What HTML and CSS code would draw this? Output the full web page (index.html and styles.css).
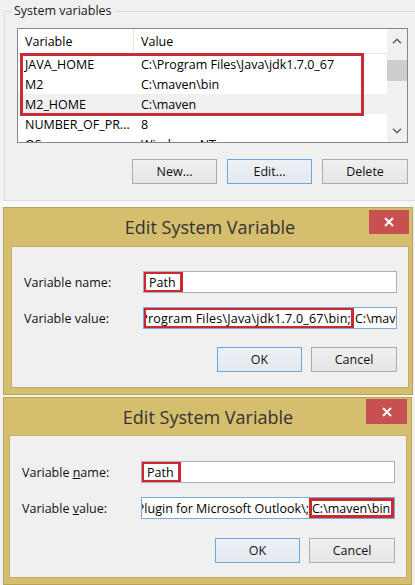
FILE: index.html
```html
<!DOCTYPE html>
<html>
<head>
<meta charset="utf-8">
<link rel="stylesheet" href="styles.css">
</head>
<body>
<div class="screen">
  <section class="sys">
    <fieldset class="group">
      <legend>System variables</legend>
      <div class="listbox">
        <div class="list-main">
          <div class="list-head"><span class="c1">Variable</span><span class="c2">Value</span></div>
          <div class="row"><span class="c1">JAVA_HOME</span><span class="c2">C:\Program Files\Java\jdk1.7.0_67</span></div>
          <div class="row"><span class="c1">M2</span><span class="c2">C:\maven\bin</span></div>
          <div class="row hl"><span class="c1">M2_HOME</span><span class="c2">C:\maven</span></div>
          <div class="row"><span class="c1">NUMBER_OF_PR...</span><span class="c2">8</span></div>
          <div class="row"><span class="c1">OS</span><span class="c2">Windows_NT</span></div>
          <div class="mark"></div>
        </div>
        <div class="scrollbar">
          <div class="sb-btn"><svg width="10" height="6" viewBox="0 0 10 6"><polyline points="1,5.2 5,1.2 9,5.2" fill="none" stroke="#606060" stroke-width="1.5"/></svg></div>
          <div class="sb-track"><div class="sb-thumb"></div></div>
          <div class="sb-btn"><svg width="10" height="6" viewBox="0 0 10 6"><polyline points="1,0.8 5,4.8 9,0.8" fill="none" stroke="#606060" stroke-width="1.5"/></svg></div>
        </div>
      </div>
      <div class="btnrow">
        <div class="btn">New...</div>
        <div class="btn def">Edit...</div>
        <div class="btn wide">Delete</div>
      </div>
    </fieldset>
    <div class="strip"></div>
  </section>

  <section class="dlg">
    <div class="titlebar">
      <span></span>
      <span class="title">Edit System Variable</span>
      <span class="close"><svg width="10" height="10" viewBox="0 0 10 10"><path d="M1 1 L9 9 M9 1 L1 9" stroke="#fff" stroke-width="2"/></svg></span>
    </div>
    <div class="panel">
      <div class="form">
        <span class="lbl">Variable name:</span>
        <div class="field"><span class="anno name">Path</span></div>
        <span class="lbl">Variable value:</span>
        <div class="field focus"><span class="anno long"><span class="txt spaced">Program Files\Java\jdk1.7.0_67\bin;</span></span><span class="rest">C:\maven\bin</span></div>
      </div>
      <div class="dbtns">
        <div class="btn def">OK</div>
        <div class="btn wide">Cancel</div>
      </div>
    </div>
  </section>

  <div class="sep"></div>

  <section class="dlg dlg2">
    <div class="titlebar">
      <span></span>
      <span class="title">Edit System Variable</span>
      <span class="close"><svg width="10" height="10" viewBox="0 0 10 10"><path d="M1 1 L9 9 M9 1 L1 9" stroke="#fff" stroke-width="2"/></svg></span>
    </div>
    <div class="panel">
      <div class="form">
        <span class="lbl">Variable <u>n</u>ame:</span>
        <div class="field"><span class="anno name">Path</span></div>
        <span class="lbl">Variable <u>v</u>alue:</span>
        <div class="field focus"><span class="clipleft"><span class="txt">Plugin for Microsoft Outlook\;</span></span><span class="anno tail">C:\maven\bin<span class="caret"></span></span></div>
      </div>
      <div class="dbtns">
        <div class="btn def">OK</div>
        <div class="btn wide">Cancel</div>
      </div>
    </div>
  </section>
</div>
</body>
</html>
```

FILE: styles.css
```css
html, body {
  margin: 0;
  padding: 0;
}

body {
  font-family: "Open Sans", "Noto Sans", sans-serif;
  font-size: 12.5px;
  color: #000;
  background: #f0f0f0;
}

.screen {
  width: 415px;
  height: 585px;
  overflow: hidden;
  background: #f2f2f2;
  display: flex;
  flex-direction: column;
}

/* ---------- System variables group ---------- */
.sys {
  flex: none;
  height: 207px;
  box-sizing: border-box;
  padding-top: 2px;
  background: #f0f0f0;
  display: flex;
  flex-direction: column;
}

.group {
  margin: 0 0 0 4px;
  padding: 0 0 16px 7px;
  border: 1px solid #dcdcdc;
  width: 440px;
  min-width: 0;
  box-sizing: border-box;
}

.group legend {
  padding: 0 2px;
  line-height: 18px;
  color: #1a1a1a;
}

.listbox {
  margin: 8px 0 0 5px;
  width: 391px;
  height: 115px;
  box-sizing: border-box;
  border: 1px solid #828790;
  background: #fff;
  display: flex;
}

.list-main {
  flex: 1;
  position: relative;
  overflow: hidden;
}

.list-head {
  height: 24px;
  border-bottom: 1px solid #e5e5e5;
  display: flex;
  align-items: center;
}

.list-head .c1 {
  height: 100%;
  display: flex;
  align-items: center;
  border-right: 1px solid #e5e5e5;
}

.c1 {
  width: 116px;
  flex: none;
  box-sizing: border-box;
  padding-left: 7px;
  white-space: nowrap;
}

.c2 {
  padding-left: 7px;
  white-space: nowrap;
}

.row {
  height: 20px;
  display: flex;
  align-items: center;
}

.row.hl {
  background: #f0f0f0;
}

.mark {
  position: absolute;
  left: 2px;
  top: 24px;
  width: 344px;
  height: 63px;
  box-sizing: border-box;
  border: 3px solid #c62d36;
}

.scrollbar {
  width: 20px;
  flex: none;
  background: #f0f0f0;
  display: flex;
  flex-direction: column;
}

.sb-btn {
  height: 24px;
  display: flex;
  align-items: center;
  justify-content: center;
}

.scrollbar .sb-btn:last-child {
  height: 22px;
}

.sb-track {
  flex: 1;
  padding-top: 7px;
}

.sb-thumb {
  height: 21px;
  background: #cdcdcd;
}

.btnrow {
  margin: 16px 0 0 5px;
  width: 391px;
  display: flex;
  justify-content: flex-end;
  gap: 10px;
}

.btn {
  width: 85px;
  height: 25px;
  box-sizing: border-box;
  border: 1px solid #acacac;
  background: linear-gradient(#f0f0f0, #e5e5e5);
  display: flex;
  align-items: center;
  justify-content: center;
  color: #111;
}

.btn.wide {
  width: 86px;
}

.btn.def {
  border-color: #6ea6dc;
  background: linear-gradient(#ecf1f6, #e3e9ef);
}

.strip {
  flex: 1;
  background: #f8f8f8;
}

/* ---------- Dialogs ---------- */
.dlg {
  flex: none;
  margin-left: 3px;
  width: 410px;
  height: 188px;
  box-sizing: border-box;
  background: #d5be6e;
  border: 1px solid #b7a15b;
  padding: 0 3px 6px 7px;
  display: flex;
  flex-direction: column;
}

.titlebar {
  height: 38px;
  flex: none;
  display: grid;
  grid-template-columns: 1fr auto 1fr;
  align-items: start;
}

.title {
  font-size: 18px;
  line-height: 38px;
  color: #333;
  white-space: nowrap;
}

.close {
  justify-self: end;
  margin-top: 2px;
  width: 40px;
  height: 24px;
  background: #c75050;
  display: flex;
  align-items: center;
  justify-content: center;
}

.panel {
  flex: 1;
  background: #f0f0f0;
  border: 1px solid #c2ab62;
  padding: 24px 11px 0 12px;
}

.form {
  display: grid;
  grid-template-columns: 119px 254px;
  row-gap: 14px;
  align-items: center;
}

.lbl {
  white-space: nowrap;
  color: #111;
}

.field {
  height: 22px;
  box-sizing: border-box;
  border: 1px solid #abadb3;
  background: #fff;
  display: flex;
  align-items: center;
  overflow: hidden;
  white-space: nowrap;
}

.field.focus {
  border-color: #7ca9d6;
}

.anno {
  box-sizing: border-box;
  border: 3px solid #cc2830;
  display: flex;
  align-items: center;
  flex: none;
}

.anno.name {
  align-self: stretch;
  margin: -1px 0 -1px -1px;
  width: 40px;
  padding-left: 3px;
}

.anno.long {
  align-self: stretch;
  margin: -1px 0 -1px -1px;
  width: 211px;
  overflow: hidden;
  justify-content: flex-end;
}

.txt {
  flex: none;
}

.spaced {
  letter-spacing: 0.2px;
}

.rest {
  padding-left: 1px;
}

.clipleft {
  flex: 1;
  min-width: 0;
  overflow: hidden;
  display: flex;
  justify-content: flex-end;
}

.anno.tail {
  width: 85px;
  height: 20px;
  margin-right: 0;
  padding-left: 0;
}

.caret {
  display: inline-block;
  width: 1px;
  height: 14px;
  background: #000;
  margin-left: 1px;
}

.dbtns {
  margin-top: 18px;
  display: flex;
  justify-content: flex-end;
  gap: 9px;
}

.sep {
  flex: none;
  height: 2px;
  background: #f5f2e8;
}

.dlg2 {
  width: 409px;
  padding: 0 4px 6px 5px;
}

.dlg2 .titlebar {
  height: 37px;
}

.dlg2 .close {
  margin-top: 1px;
  width: 41px;
  height: 25px;
}

.dlg2 .panel {
  padding-top: 25px;
}

.dlg2 .dbtns {
  margin-top: 19px;
}
```
